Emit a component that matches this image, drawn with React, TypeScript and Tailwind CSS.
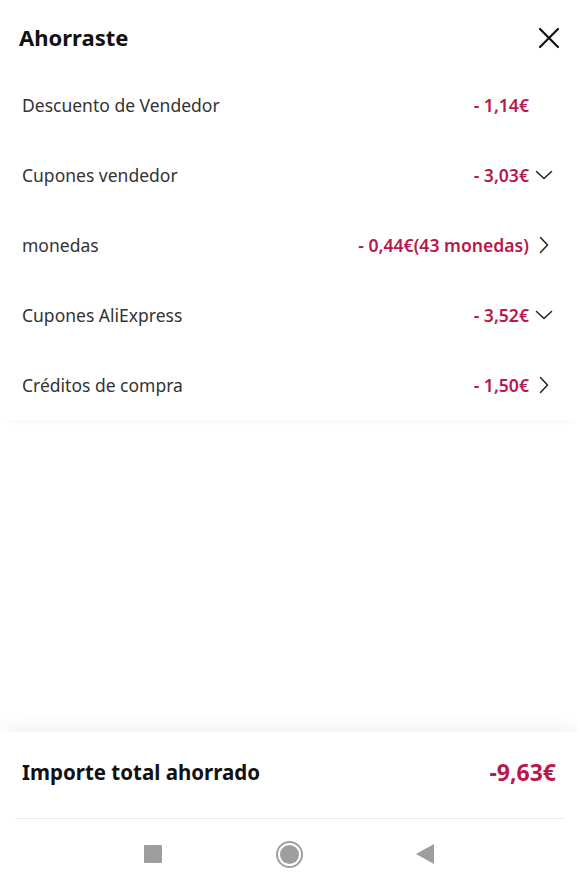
import React from "react";

const rows = [
  { label: "Descuento de Vendedor", value: "- 1,14€", icon: "none" },
  { label: "Cupones vendedor", value: "- 3,03€", icon: "down" },
  { label: "monedas", value: "- 0,44€(43 monedas)", icon: "right" },
  { label: "Cupones AliExpress", value: "- 3,52€", icon: "down" },
  { label: "Créditos de compra", value: "- 1,50€", icon: "right" },
];

function Chevron({ dir }: { dir: string }) {
  if (dir === "down") {
    return (
      <svg width="18" height="18" viewBox="0 0 18 18" fill="none" stroke="#222" strokeWidth="1.5" strokeLinecap="round" strokeLinejoin="round">
        <path d="M1.5 5.5 9 12.5 16.5 5.5" />
      </svg>
    );
  }
  if (dir === "right") {
    return (
      <svg width="18" height="18" viewBox="0 0 18 18" fill="none" stroke="#222" strokeWidth="1.5" strokeLinecap="round" strokeLinejoin="round">
        <path d="M5.5 1.5 12.5 9 5.5 16.5" />
      </svg>
    );
  }
  return <span className="w-[18px] h-[18px]" />;
}

export default function App() {
  return (
    <div
      className="w-[578px] h-[881px] bg-white flex flex-col overflow-hidden"
      style={{ fontFamily: "'Noto Sans', 'Open Sans', sans-serif" }}
    >
      {/* Header */}
      <div className="h-[70px] pt-[5px] flex items-center justify-between pl-[19px] pr-[18px]">
        <h1 className="text-[22px] font-bold text-[#111]">Ahorraste</h1>
        <svg width="22" height="22" viewBox="0 0 22 22" fill="none" stroke="#111" strokeWidth="2.2" strokeLinecap="round">
          <path d="M2 2 20 20M20 2 2 20" />
        </svg>
      </div>

      {/* Rows */}
      <div className="flex flex-col shadow-[0_6px_8px_-6px_rgba(0,0,0,0.06)]">
        {rows.map((r) => (
          <div key={r.label} className="h-[70px] flex items-center justify-between pl-[22px] pr-[25px]">
            <span className="text-[17.5px] font-[450] text-[#333]">{r.label}</span>
            <div className="flex items-center gap-[6px]">
              <span className="text-[17.6px] font-semibold text-[#b8184a]">{r.value}</span>
              <Chevron dir={r.icon} />
            </div>
          </div>
        ))}
      </div>

      <div className="flex-1" />

      {/* Footer */}
      <div className="shadow-[0_-10px_16px_-4px_rgba(0,0,0,0.05)] bg-white">
        <div className="h-[86px] pb-[6px] flex items-center justify-between pl-[22px] pr-[22px]">
          <span className="text-[20.5px] font-bold text-[#111]">Importe total ahorrado</span>
          <span className="text-[23px] font-bold text-[#b8184a]">-9,63€</span>
        </div>
        <div className="mx-[15px] h-px bg-[#e8e8e8]" />
        <div className="h-[62px] pt-[8px] flex items-center justify-center">
          <div className="flex items-center justify-between w-[290px]">
            <span className="w-[18px] h-[18px] bg-[#9e9e9e] rounded-[1px]" />
            <span className="w-[27px] h-[27px] rounded-full border-2 border-[#a0a0a0] flex items-center justify-center">
              <span className="w-[19px] h-[19px] rounded-full bg-[#9e9e9e]" />
            </span>
            <svg width="18" height="20" viewBox="0 0 18 20">
              <path d="M0 10 18 0 18 20Z" fill="#9e9e9e" />
            </svg>
          </div>
        </div>
      </div>
    </div>
  );
}
